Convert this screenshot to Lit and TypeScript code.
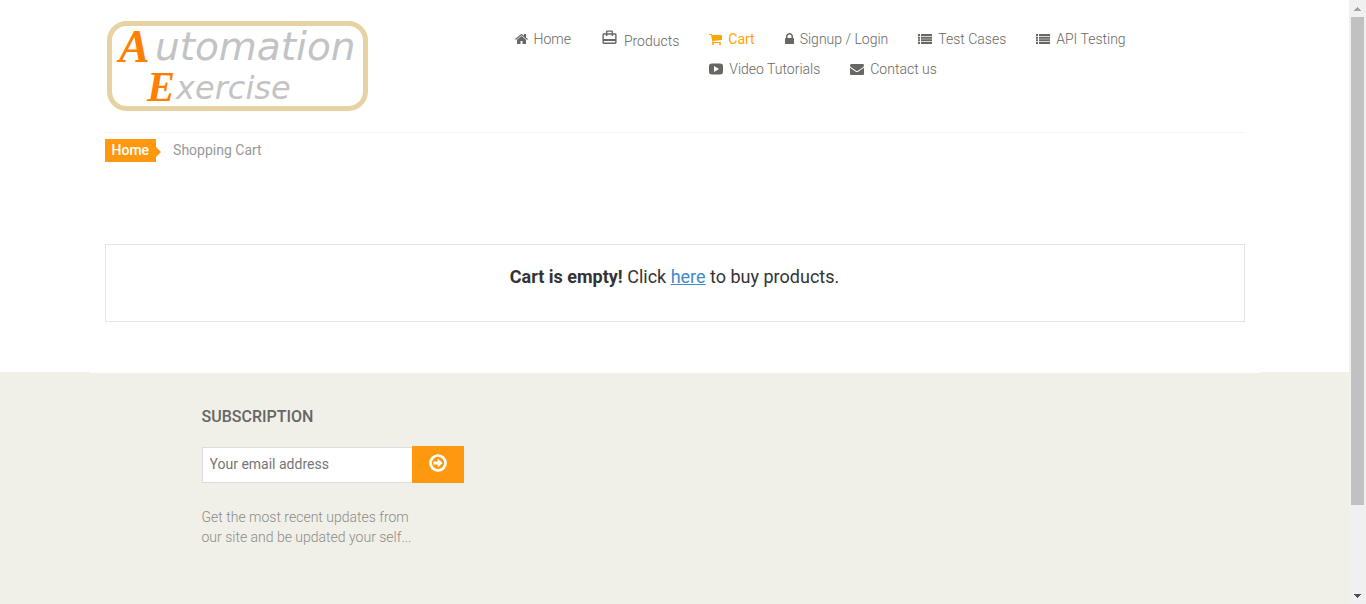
import { LitElement, html, css, svg, nothing } from "lit";
import { customElement } from "lit/decorators.js";
import { classMap } from "lit/directives/class-map.js";

const list = svg`<path d="M0 256h256v256H0zM384 256h1408v256H384zM0 597h256v256H0zM384 597h1408v256H384zM0 939h256v256H0zM384 939h1408v256H384zM0 1280h256v256H0zM384 1280h1408v256H384z"/>`;

const glyphs = {
  home: {
    box: "64 0 1664 1792",
    width: 13,
    shape: svg`<path d="M1472 992v480q0 26-19 45t-45 19h-384v-384h-256v384h-384q-26 0-45-19t-19-45v-480q0-1 .5-3t.5-3l575-474 575 474q1 2 1 6zm223-69l-62 74q-8 9-21 11h-3q-13 0-21-7l-692-577-692 577q-12 8-24 7-13-2-21-11l-62-74q-8-10-7-23.5t11-21.5l719-599q32-26 76-26t76 26l244 204v-195q0-14 9-23t23-9h192q14 0 23 9t9 23v408l219 182q10 8 11 21.5t-7 23.5z"/>`,
  },
  products: {
    box: "0 0 24 24",
    width: 17,
    shape: svg`<path d="M20 6h-3V4c0-1.110-.890-2-2-2H9c-1.110 0-2 .890-2 2v2H4c-1.110 0-2 .890-2 2v11c0 1.110.890 2 2 2h16c1.110 0 2-.890 2-2V8c0-1.110-.890-2-2-2zM9 4h6v2H9V4zm11 15H4v-2h16v2zm0-5H4V8h3v2h2V8h6v2h2V8h3v6z"/>`,
  },
  cart: {
    box: "64 0 1664 1792",
    width: 13,
    shape: svg`<path d="M704 1536q0 52-38 90t-90 38-90-38-38-90 38-90 90-38 90 38 38 90zm896 0q0 52-38 90t-90 38-90-38-38-90 38-90 90-38 90 38 38 90zm128-1088v512q0 24-16.500 42.500t-40.500 21.500l-1044 122q13 60 13 70 0 16-24 64h920q26 0 45 19t19 45-19 45-45 19h-1024q-26 0-45-19t-19-45q0-11 8-31.500t16-36 21.500-40 15.500-29.500l-177-823h-204q-26 0-45-19t-19-45 19-45 45-19h256q16 0 28.500 6.500t19.500 15.500 13 24.500 8 26 5.500 29.500 4.500 26h1201q26 0 45 19t19 45z"/>`,
  },
  lock: {
    box: "320 0 1152 1792",
    width: 9,
    shape: svg`<path d="M640 768h512v-192q0-106-75-181t-181-75-181 75-75 181v192zm832 96v576q0 40-28 68t-68 28h-960q-40 0-68-28t-28-68v-576q0-40 28-68t68-28h32v-192q0-184 132-316t316-132 316 132 132 316v192h32q40 0 68 28t28 68z"/>`,
  },
  list: { box: "0 0 1792 1792", width: 14, shape: list },
  video: {
    box: "0 0 14 14",
    width: 14,
    shape: svg`<path fill-rule="evenodd" d="M3 1.500h8c2.200 0 3 .800 3 3v5c0 2.200-.800 3-3 3H3c-2.200 0-3-.800-3-3v-5c0-2.200.800-3 3-3zm2 2.500v6l5-3z"/>`,
  },
  envelope: {
    box: "0 0 1792 1792",
    width: 14,
    shape: svg`<path d="M1792 710v794q0 66-47 113t-113 47h-1472q-66 0-113-47t-47-113v-794q44 49 101 87 362 246 497 345 57 42 92.500 65.500t94.500 48 110 24.500h2q51 0 110-24.500t94.500-48 92.500-65.500q170-123 498-345 57-39 100-87zm0-294q0 79-49 151t-122 123q-376 261-468 325-10 7-42.500 31t-54 38.500-52 32.500-57.500 27-50 9h-2q-23 0-50-9t-57.500-27-52-32.500-54-38.500-42.500-31q-91-64-262-182.500t-205-142.500q-62-42-117-115.500t-55-136.500q0-78 41.500-130t118.500-52h1472q65 0 112.500 47t47.500 113z"/>`,
  },
};

type Glyph = keyof typeof glyphs;

const links: { text: string; icon: Glyph; active?: boolean }[] = [
  { text: "Home", icon: "home" },
  { text: "Products", icon: "products" },
  { text: "Cart", icon: "cart", active: true },
  { text: "Signup / Login", icon: "lock" },
  { text: "Test Cases", icon: "list" },
  { text: "API Testing", icon: "list" },
  { text: "Video Tutorials", icon: "video" },
  { text: "Contact us", icon: "envelope" },
];

@customElement("app-root")
export class AppRoot extends LitElement {
  static styles = css`
    :host {
      display: flex;
      height: 100vh;
      overflow: hidden;
      background: #fff;
      font: 400 14px/20px Roboto, sans-serif;
      color: #333;
    }
    *, *::before, *::after { box-sizing: border-box; }
    svg { fill: currentColor; display: block; flex: none; }
    .page {
      flex: 1;
      min-width: 0;
      overflow: hidden;
      display: flex;
      flex-direction: column;
    }
    .container {
      width: 100%;
      max-width: 1170px;
      margin: 0 auto;
      padding: 0 15px;
    }
    .header {
      display: grid;
      grid-template-columns: 1fr 2fr;
      column-gap: 15px;
      padding: 19px 0;
      border-bottom: 1px solid #f5f5f5;
    }
    .logo {
      display: block;
      padding: 2px;
      width: 265px;
    }
    .menu {
      list-style: none;
      margin: 0;
      padding: 0 0 0 5px;
    }
    .item {
      float: left;
      margin-top: 10px;
      padding: 0 15px;
    }
    .link {
      display: flex;
      align-items: center;
      gap: 6px;
      font-weight: 300;
      color: #696763;
      text-decoration: none;
      white-space: nowrap;
    }
    .tall { padding-top: 2px; height: 24px; align-items: flex-start; }
    .tall svg { margin-top: -2px; }
    .active { color: orange; font-weight: 400; }
    .crumbs {
      display: flex;
      list-style: none;
      margin: 6px 0 0;
      padding: 0;
      color: #999;
    }
    .crumb {
      display: block;
      position: relative;
      margin-right: 17px;
      padding: 1px 7px 2px;
      background: #fe980f;
      color: #fff;
      font-weight: 500;
      text-decoration: none;
    }
    .crumb::after {
      content: "";
      position: absolute;
      left: 100%;
      top: 8px;
      border: 5px solid transparent;
      border-left-color: #fe980f;
      border-right-width: 0;
    }
    .current { padding-top: 1px; }
    .empty {
      margin: 82px 0 50px;
      padding: 20px 20px 32px;
      border: 1px solid #e6e4df;
      font-size: 18px;
      line-height: 24px;
      text-align: center;
    }
    .empty p { margin: 0; }
    .empty b { font-weight: 700; }
    .empty a { color: #428bca; }
    .footer {
      flex: 1;
      background: #f0f0e9;
    }
    .edge {
      max-width: 1170px;
      height: 1px;
      margin: 0 auto;
      background: #fff;
    }
    .widget { padding: 34px 97px 0; }
    .title {
      margin: 0 0 19px;
      font-size: 16px;
      line-height: 20px;
      font-weight: 500;
      color: #666663;
      text-transform: uppercase;
    }
    .form { display: flex; align-items: flex-end; }
    .email {
      width: 211px;
      height: 36px;
      padding: 0 7px 2px;
      border: 1px solid #ddd;
      border-radius: 0;
      outline: 0;
      background: #fff;
      font: inherit;
      color: #333;
    }
    .email::placeholder { color: #757575; opacity: 1; }
    .send {
      display: grid;
      place-items: center;
      width: 52px;
      height: 37px;
      margin-left: -1px;
      padding: 0 0 3px;
      border: 0;
      background: #fe980f;
      color: #fff;
    }
    .note {
      margin: 24px 0 0;
      font-weight: 300;
      color: #8c8c88;
    }
    .scroll {
      flex: none;
      width: 17px;
      background: #f0f0f0;
      display: grid;
      grid-template-rows: 17px 1fr 17px;
    }
    .arrow { place-self: center; }
    .dim { color: #a3a3a3; }
    .dark { color: #505050; }
    .thumb { height: 85.6%; margin: 0 2px; background: #c1c1c1; }
  `;

  private icon(name: Glyph) {
    const g = glyphs[name];
    const height = name === "products" ? 17 : 14;
    return html`<svg width=${g.width} height=${height} viewBox=${g.box} aria-hidden="true">${g.shape}</svg>`;
  }

  render() {
    return html`
      <div class="page">
        <header class="container">
          <div class="header">
            <a class="logo" href="#" aria-label="Automation Exercise">
              <svg width="261" height="90" viewBox="0 0 261 90" font-family="DejaVu Sans, sans-serif" font-style="italic">
                <rect x="2.500" y="2.500" width="256" height="85" rx="17" fill="#fff" stroke="#e6d2a2" stroke-width="5" />
                <text x="12" y="41" font-size="46" font-weight="700" font-family="Liberation Serif, serif" fill="#ff8000">A</text>
                <text x="48" y="39" font-size="39" fill="#c3c3c3">utomation</text>
                <text x="40" y="80" font-size="42" font-weight="700" font-family="Liberation Serif, serif" fill="#ff8000">E</text>
                <text x="69" y="78" font-size="32" fill="#c3c3c3">xercise</text>
              </svg>
            </a>
            <nav>
              <ul class="menu">
                ${links.map(
                  (l) => html`<li class="item">
                    <a href="#" class=${classMap({ link: true, active: !!l.active, tall: l.icon === "products" })}
                      aria-current=${l.active ? "page" : nothing}>${this.icon(l.icon)}<span>${l.text}</span></a>
                  </li>`
                )}
              </ul>
            </nav>
          </div>
        </header>
        <main class="container">
          <ol class="crumbs">
            <li><a class="crumb" href="#">Home</a></li>
            <li class="current">Shopping Cart</li>
          </ol>
          <section class="empty">
            <p><b>Cart is empty!</b> Click <a href="#">here</a> to buy products.</p>
          </section>
        </main>
        <footer class="footer">
          <div class="edge"></div>
          <div class="container">
            <div class="widget">
              <h2 class="title">Subscription</h2>
              <form class="form" @submit=${(e: Event) => e.preventDefault()}>
                <input class="email" type="email" placeholder="Your email address" aria-label="Your email address" />
                <button class="send" type="submit" aria-label="Subscribe">
                  <svg width="18" height="18" viewBox="0 0 18 18">
                    <circle cx="9" cy="9" r="7.500" fill="none" stroke="currentColor" stroke-width="2.700" />
                    <path d="M4.500 7.600h4.300V4.600L13.500 9l-4.700 4.400v-3H4.500z" />
                  </svg>
                </button>
              </form>
              <p class="note">Get the most recent updates from <br />our site and be updated your self...</p>
            </div>
          </div>
        </footer>
      </div>
      <div class="scroll" aria-hidden="true">
        <svg class="arrow dim" width="7" height="4" viewBox="0 0 7 4" shape-rendering="crispEdges"><path d="M3 0h1v1h1v1h1v1h1v1H0V3h1V2h1V1h1z" /></svg>
        <div class="thumb"></div>
        <svg class="arrow dark" width="7" height="4" viewBox="0 0 7 4" shape-rendering="crispEdges"><path d="M0 0h7v1H6v1H5v1H4v1H3V3H2V2H1V1H0z" /></svg>
      </div>
    `;
  }
}
